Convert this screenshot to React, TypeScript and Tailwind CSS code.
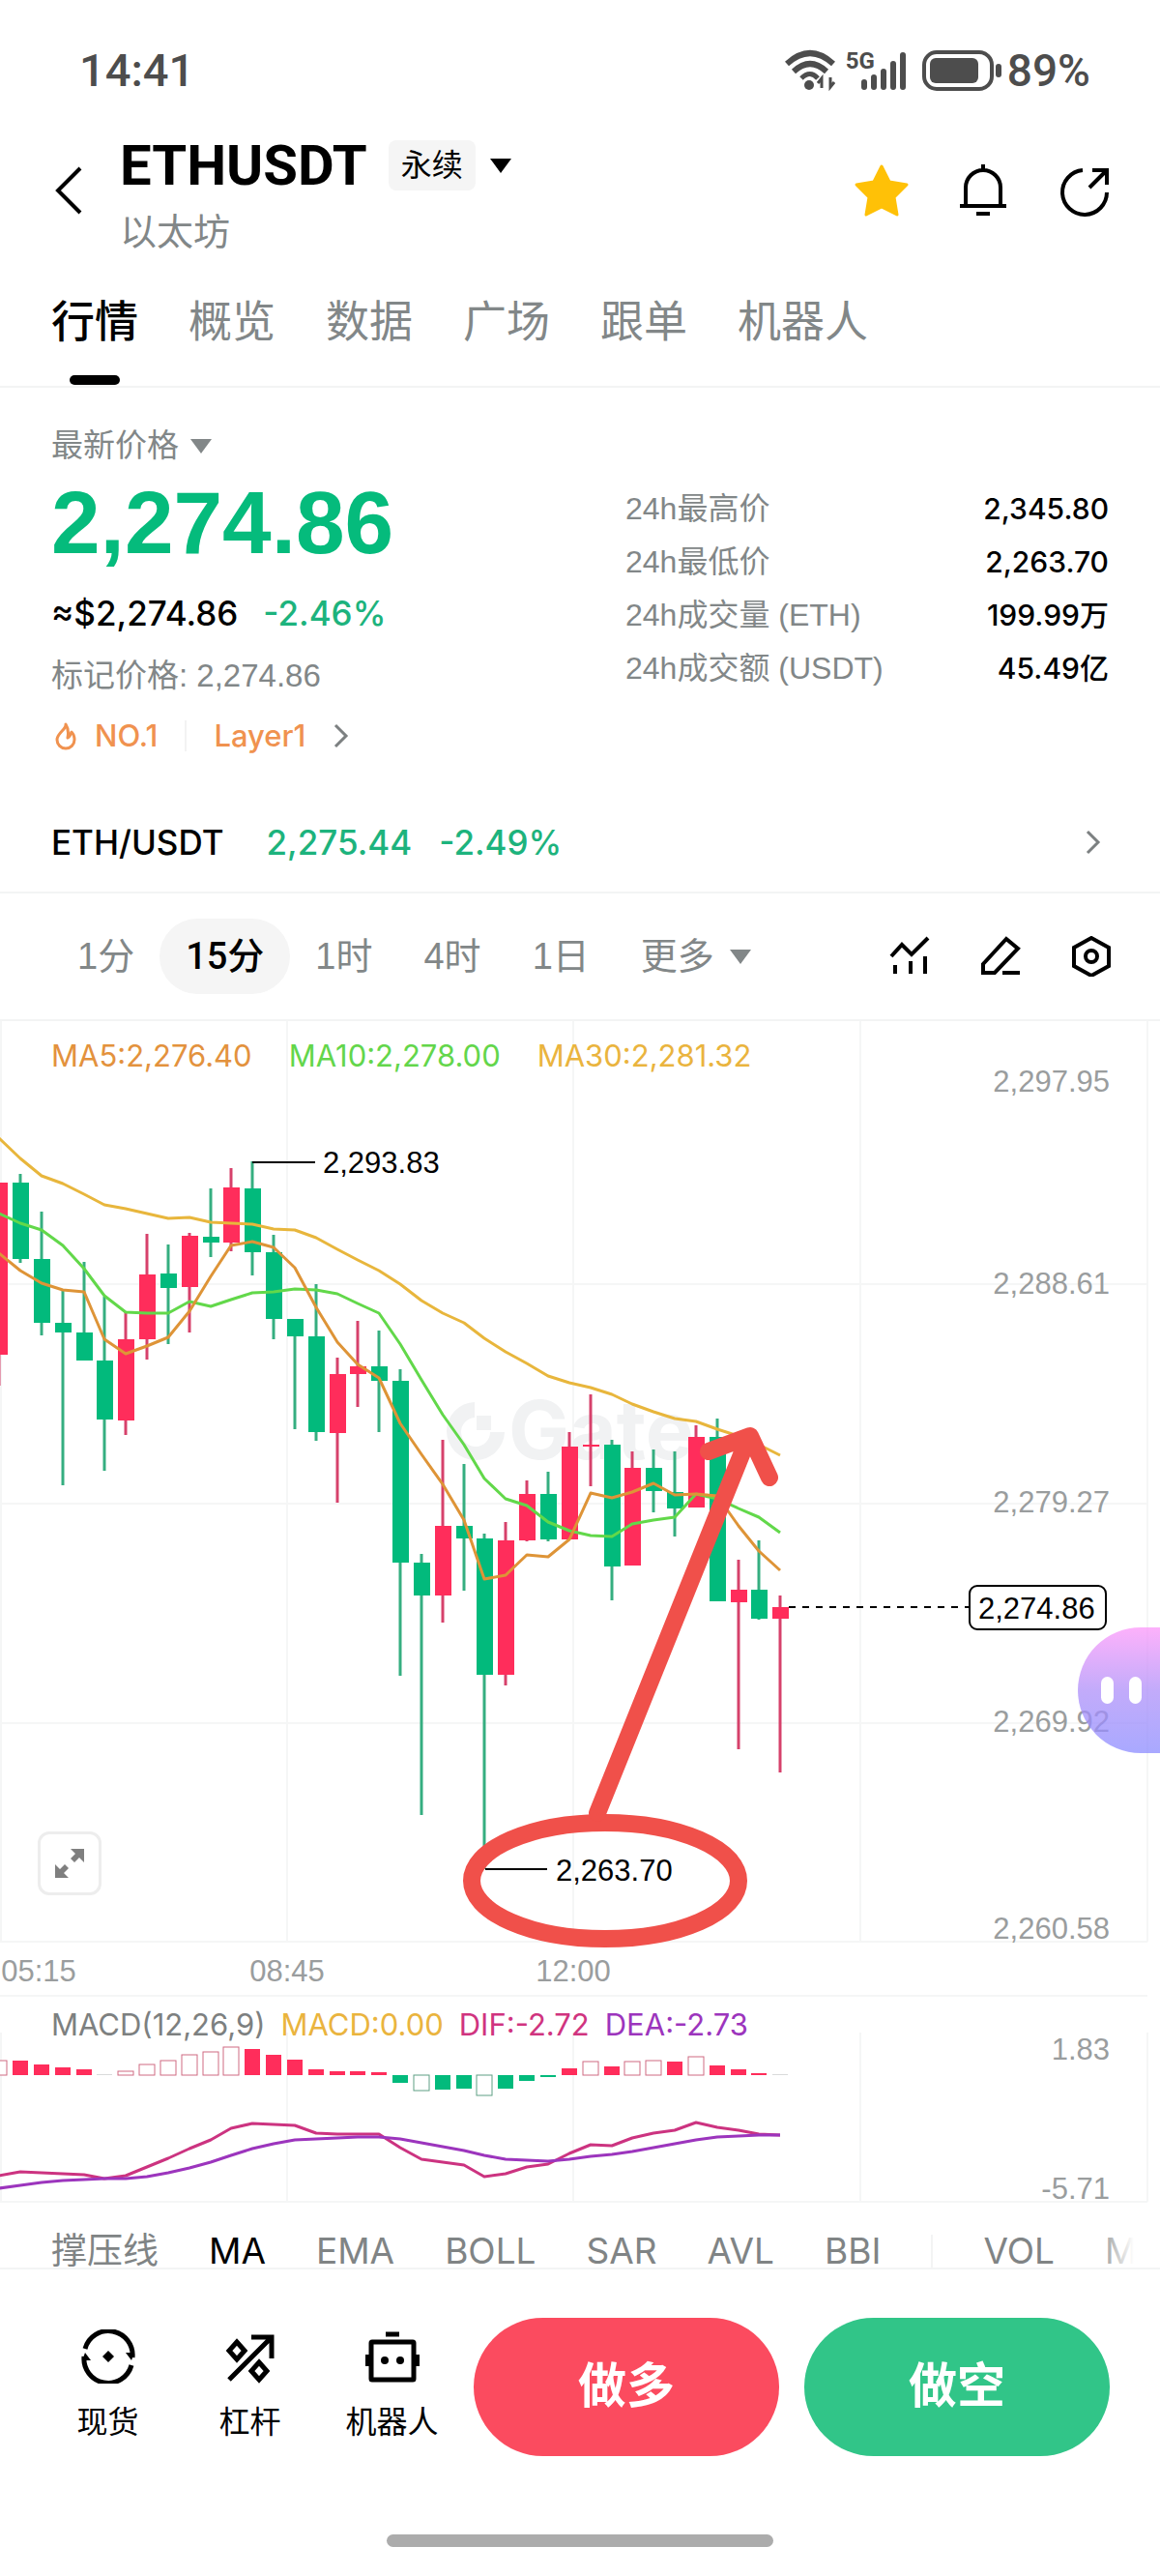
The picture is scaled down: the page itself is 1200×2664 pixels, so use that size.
import React, { useState } from 'react';

interface Candle {
  up: boolean;
  high: number;
  top: number;
  bottom: number;
  low: number;
}

interface MacdBar {
  y: number;
  color: 'red' | 'green' | 'flat';
  hollow?: boolean;
}

const PAGE_FONT = "font-['Liberation_Sans','Noto_Sans_CJK_SC',sans-serif]";
const TITLE_FONT = "font-['Roboto','Noto_Sans_CJK_SC',sans-serif]";
const LABEL_FONT = "font-['Inter','Noto_Sans_CJK_SC',sans-serif]";

const TABS = ['行情', '概览', '数据', '广场', '跟单', '机器人'];
const INTERVALS = ['1分', '15分', '1时', '4时', '1日'];
const MAIN_INDICATORS = ['撑压线', 'MA', 'EMA', 'BOLL', 'SAR', 'AVL', 'BBI'];

const STATS = [
  { label: '24h最高价', value: '2,345.80' },
  { label: '24h最低价', value: '2,263.70' },
  { label: '24h成交量 (ETH)', value: '199.99万' },
  { label: '24h成交额 (USDT)', value: '45.49亿' },
];

const RED = '#ff2d5b';
const RED_WICK = '#d6416b';
const GREEN = '#02ba7c';
const GREEN_WICK = '#35ae80';

const c = (up: boolean, high: number, top: number, bottom: number, low: number): Candle => ({ up, high, top, bottom, low });

// Red is a rising candle here, green a falling one
const CANDLES: Candle[] = [
  c(true, 1223, 1223, 1401, 1433),
  c(false, 1214, 1223, 1302, 1306),
  c(false, 1253, 1302, 1368, 1381),
  c(false, 1335, 1368, 1378, 1536),
  c(false, 1305, 1378, 1407, 1407),
  c(false, 1341, 1407, 1468, 1521),
  c(true, 1357, 1385, 1469, 1484),
  c(true, 1276, 1318, 1385, 1406),
  c(false, 1287, 1317, 1332, 1390),
  c(true, 1275, 1278, 1331, 1378),
  c(false, 1229, 1279, 1285, 1300),
  c(true, 1208, 1228, 1285, 1294),
  c(false, 1201, 1229, 1295, 1319),
  c(false, 1277, 1295, 1364, 1385),
  c(false, 1364, 1364, 1382, 1478),
  c(false, 1328, 1382, 1481, 1490),
  c(true, 1404, 1421, 1482, 1554),
  c(true, 1366, 1413, 1421, 1455),
  c(false, 1376, 1413, 1428, 1481),
  c(false, 1416, 1428, 1616, 1733),
  c(false, 1607, 1616, 1650, 1877),
  c(true, 1489, 1578, 1650, 1678),
  c(false, 1514, 1578, 1591, 1645),
  c(false, 1586, 1591, 1732, 1933),
  c(true, 1574, 1593, 1732, 1743),
  c(true, 1531, 1545, 1593, 1594),
  c(false, 1522, 1545, 1592, 1594),
  c(true, 1481, 1496, 1592, 1592),
  c(true, 1442, 1494, 1496, 1537),
  c(false, 1489, 1494, 1620, 1655),
  c(true, 1501, 1518, 1619, 1619),
  c(false, 1499, 1518, 1542, 1564),
  c(false, 1501, 1543, 1560, 1589),
  c(true, 1474, 1486, 1559, 1559),
  c(false, 1467, 1486, 1656, 1656),
  c(true, 1613, 1644, 1657, 1809),
  c(false, 1593, 1644, 1674, 1675),
  c(true, 1650, 1662, 1674, 1833),
];

const MA30 = [1177, 1198, 1216, 1224, 1235, 1246, 1250, 1255, 1260, 1259, 1264, 1265, 1266, 1271, 1272, 1280, 1292, 1303, 1314, 1328, 1345, 1358, 1368, 1384, 1398, 1410, 1423, 1430, 1435, 1442, 1452, 1460, 1467, 1470, 1478, 1485, 1494, 1505];
const MA10 = [1255, 1265, 1272, 1288, 1312, 1340, 1357, 1358, 1358, 1346, 1351, 1344, 1337, 1336, 1333, 1334, 1338, 1348, 1358, 1390, 1427, 1463, 1494, 1529, 1550, 1557, 1574, 1583, 1588, 1589, 1576, 1572, 1569, 1545, 1550, 1560, 1569, 1585];
const MA5 = [1296, 1314, 1327, 1334, 1336, 1385, 1400, 1392, 1383, 1356, 1320, 1288, 1284, 1290, 1311, 1352, 1388, 1411, 1425, 1472, 1504, 1535, 1572, 1633, 1629, 1608, 1610, 1592, 1544, 1549, 1543, 1534, 1546, 1545, 1547, 1578, 1604, 1624];
const DIF = [2250, 2246, 2247, 2248, 2249, 2253, 2250, 2241, 2232, 2222, 2213, 2201, 2196, 2197, 2198, 2206, 2207, 2207, 2207, 2221, 2233, 2236, 2239, 2251, 2248, 2241, 2238, 2227, 2218, 2219, 2211, 2206, 2203, 2195, 2200, 2203, 2207, 2208];
const DEA = [2263, 2260, 2257, 2255, 2254, 2253, 2253, 2251, 2247, 2242, 2236, 2229, 2222, 2217, 2213, 2212, 2211, 2210, 2210, 2212, 2216, 2220, 2224, 2229, 2233, 2234, 2235, 2233, 2230, 2228, 2225, 2221, 2217, 2213, 2210, 2209, 2208, 2208];

const MACD_ZERO = 2146;
const MACD_BARS: MacdBar[] = [
  { y: 2131, color: 'red', hollow: true },
  { y: 2131, color: 'red' },
  { y: 2135, color: 'red' },
  { y: 2138, color: 'red' },
  { y: 2140, color: 'red' },
  { y: 2145, color: 'flat' },
  { y: 2142, color: 'red', hollow: true },
  { y: 2135, color: 'red', hollow: true },
  { y: 2131, color: 'red', hollow: true },
  { y: 2125, color: 'red', hollow: true },
  { y: 2122, color: 'red', hollow: true },
  { y: 2117, color: 'red', hollow: true },
  { y: 2119, color: 'red' },
  { y: 2125, color: 'red' },
  { y: 2130, color: 'red' },
  { y: 2140, color: 'red' },
  { y: 2142, color: 'red' },
  { y: 2142, color: 'red' },
  { y: 2143, color: 'red' },
  { y: 2154, color: 'green' },
  { y: 2162, color: 'green', hollow: true },
  { y: 2161, color: 'green' },
  { y: 2160, color: 'green' },
  { y: 2167, color: 'green', hollow: true },
  { y: 2160, color: 'green' },
  { y: 2152, color: 'green' },
  { y: 2148, color: 'green' },
  { y: 2139, color: 'red' },
  { y: 2132, color: 'red', hollow: true },
  { y: 2137, color: 'red' },
  { y: 2132, color: 'red', hollow: true },
  { y: 2131, color: 'red', hollow: true },
  { y: 2132, color: 'red' },
  { y: 2127, color: 'red', hollow: true },
  { y: 2136, color: 'red' },
  { y: 2140, color: 'red' },
  { y: 2144, color: 'red' },
  { y: 2145, color: 'flat' },
];

const xAt = (i: number) => Math.round(21 + 21.84 * (i - 1));
const toPoints = (ys: number[]) => ys.map((y, i) => `${xAt(i)},${y}`).join(' ');

const Caret: React.FC<{ className?: string }> = ({ className = '' }) => (
  <svg viewBox="0 0 22 15" className={`w-[22px] h-[15px] ${className}`} fill="currentColor" aria-hidden="true">
    <path d="M0 0h22L11 15z" />
  </svg>
);

const ChevronRight: React.FC = () => (
  <svg viewBox="0 0 16 26" className="w-4 h-[26px] text-[#7c8081]" fill="none" stroke="currentColor" strokeWidth="3" aria-hidden="true">
    <path d="M2 2l11 11L2 24" />
  </svg>
);

const StatusBar: React.FC = () => (
  <div className={`flex items-center justify-between pt-[46px] pl-[82px] pr-[72px] h-[100px] text-[#4d4d4d] font-medium ${TITLE_FONT}`}>
    <span className="text-[47px] leading-[54px]">14:41</span>
    <div className="flex items-center">
      <svg viewBox="0 0 52 44" className="w-[52px] h-11" fill="none" stroke="currentColor" aria-hidden="true">
        <path d="M2 15Q26 -7 50 15" strokeWidth="6" />
        <path d="M9 23Q26 7 43 23" strokeWidth="6" />
        <path d="M17 30Q26 21 34 30" strokeWidth="5" />
        <circle cx="25" cy="37" r="5" fill="currentColor" stroke="none" />
        <path d="M38 40V30l-4 5M47 29v10l4-5" strokeWidth="3" />
      </svg>
      <div className="relative ml-[11px]">
        <svg viewBox="0 0 63 44" className="w-[63px] h-11" fill="none" stroke="currentColor" strokeWidth="6" strokeLinecap="round" aria-hidden="true">
          <path d="M19 34v5M29 29v10M39 23v16M49 15v24M59 6v33" />
        </svg>
        <span className="absolute left-0 top-0 text-[24px] leading-6 font-bold">5G</span>
      </div>
      <svg viewBox="0 0 84 42" className="w-[84px] h-[42px] ml-4 mr-1" fill="none" aria-hidden="true">
        <rect x="2" y="2" width="70" height="38" rx="13" stroke="currentColor" strokeWidth="4" />
        <rect x="8" y="8" width="50" height="26" rx="6" fill="currentColor" />
        <rect x="76" y="14" width="6" height="14" rx="3" fill="currentColor" />
      </svg>
      <span className="text-[46px] leading-[54px]">89%</span>
    </div>
  </div>
);

const Header: React.FC = () => (
  <header className="flex items-center pt-[35px] pl-[56px] pr-[48px]">
    <button aria-label="返回" className="w-[30px] mr-[38px]">
      <svg viewBox="0 0 30 50" className="w-[30px] h-[50px]" fill="none" stroke="currentColor" strokeWidth="4" aria-hidden="true">
        <path d="M27 2L4 25l23 23" />
      </svg>
    </button>
    <div className="flex-1">
      <div className="flex items-center h-[72px]">
        <h1 className={`text-[58px] leading-[72px] font-bold ${TITLE_FONT}`}>ETHUSDT</h1>
        <button className="flex items-center ml-[22px]">
          <span className="px-[13px] rounded-lg bg-[#f5f5f5] text-[32px] leading-[52px]">永续</span>
          <Caret className="ml-[15px]" />
        </button>
      </div>
      <p className="mt-[14px] text-[38px] leading-[38px] text-[#828788]">以太坊</p>
    </div>
    <div className="flex items-center gap-[45px]">
      <button aria-label="收藏" className="text-[#ffc107]">
        <svg viewBox="0 0 60 60" className="w-[60px] h-[60px]" fill="currentColor" stroke="currentColor" strokeWidth="3" strokeLinejoin="round" aria-hidden="true">
          <path d="M30 5l8 16 18 3-13 13 3 18-16-8-16 8 3-18L4 24l18-3z" />
        </svg>
      </button>
      <button aria-label="提醒">
        <svg viewBox="0 0 60 60" className="w-[60px] h-[60px]" fill="none" stroke="currentColor" strokeWidth="4" aria-hidden="true">
          <path d="M30 3v6M12 45V27a18 18 0 0 1 36 0v18M6 46h48M23 54h14" />
        </svg>
      </button>
      <button aria-label="分享">
        <svg viewBox="0 0 60 60" className="w-[60px] h-[60px]" fill="none" stroke="currentColor" strokeWidth="4" aria-hidden="true">
          <path d="M28 9A23 23 0 1 0 53 32M35 27L52 10M38 9h15v15" />
        </svg>
      </button>
    </div>
  </header>
);

const PriceSummary: React.FC = () => (
  <section className="pt-10 px-[53px]">
    <div className="flex justify-between">
      <div>
        <button className="flex items-center gap-[12px] text-[33px] leading-10 text-[#828788]">
          最新价格
          <Caret />
        </button>
        <p className="mt-[10px] text-[91px] leading-[100px] font-bold text-[#05bb7c]">2,274.86</p>
        <p className={`mt-[21px] flex gap-[26px] text-[35px] leading-[44px] font-medium ${LABEL_FONT}`}>
          <span>≈$2,274.86</span>
          <span className="text-[#1db37d]">-2.46%</span>
        </p>
        <p className="mt-[23px] text-[33px] leading-10 text-[#828788]">标记价格: 2,274.86</p>
        <a href="#layer1" className={`mt-[22px] flex items-center text-[31px] leading-10 font-medium text-[#f0924f] ${LABEL_FONT}`}>
          <svg viewBox="0 0 28 30" className="w-7 h-[30px] mr-[17px]" fill="none" stroke="currentColor" strokeWidth="3" strokeLinejoin="round" aria-hidden="true">
            <path d="M15 3c1 5-9 9-9 16 0 5 4 9 9 9s9-4 9-9c0-3-1-6-3-8-1 3-2 5-4 6 1-5 0-11-2-14z" />
          </svg>
          NO.1
          <span className="mx-[28px] h-8 w-[2px] bg-[#f3f3f3]" />
          <span className="mr-[29px]">Layer1</span>
          <ChevronRight />
        </a>
      </div>
      <dl className="mt-[58px] w-[500px]">
        {STATS.map(({ label, value }) => (
          <div key={label} className="flex justify-between leading-[55px]">
            <dt className="text-[32px] text-[#828788]">{label}</dt>
            <dd className={`text-[30px] font-medium ${LABEL_FONT}`}>{value}</dd>
          </div>
        ))}
      </dl>
    </div>
    <a href="#spot" className={`mt-[68px] pb-[29px] flex items-center text-[35px] leading-[44px] font-medium ${LABEL_FONT}`}>
      <span>ETH/USDT</span>
      <span className="ml-[44px] text-[#1db37d]">2,275.44</span>
      <span className="ml-[28px] mr-auto text-[#1db37d]">-2.49%</span>
      <span className="mr-[8px]">
        <ChevronRight />
      </span>
    </a>
  </section>
);

const ChartToolbar: React.FC = () => {
  const [interval, setInterval] = useState('15分');

  return (
    <div className="flex items-center justify-between py-[26px] pl-20 pr-[50px] border-y-2 border-[#f3f4f4]">
      <div className="flex items-center gap-[53px] text-[38px] leading-[78px] text-[#828788]">
        {INTERVALS.map((item) => (
          <button
            key={item}
            onClick={() => setInterval(item)}
            className={item === interval ? `-mx-[27px] px-[27px] rounded-full bg-[#f5f5f5] font-medium text-black ${TITLE_FONT}` : ''}
          >
            {item}
          </button>
        ))}
        <button className="flex items-center gap-[16px]">
          更多
          <Caret />
        </button>
      </div>
      <div className="flex items-center gap-[52px]">
        <button aria-label="指标">
          <svg viewBox="0 0 42 42" className="w-[42px] h-[42px]" fill="none" stroke="currentColor" strokeWidth="4" aria-hidden="true">
            <path d="M2 21l11-12 10 10L40 2M6 30v9M22 26v13M37 21v18" />
          </svg>
        </button>
        <button aria-label="画线">
          <svg viewBox="0 0 42 42" className="w-[42px] h-[42px]" fill="none" stroke="currentColor" strokeWidth="4" aria-hidden="true">
            <path d="M3 38v-9L27 3l12 10-24 25zM23 38h18" />
          </svg>
        </button>
        <button aria-label="设置">
          <svg viewBox="0 0 42 42" className="w-[42px] h-[42px]" fill="none" stroke="currentColor" strokeWidth="4" aria-hidden="true">
            <path d="M21 2l18 10v19L21 41 3 31V12z" />
            <circle cx="21" cy="21" r="6" />
          </svg>
        </button>
      </div>
    </div>
  );
};

const PriceChart: React.FC = () => (
  <div className="relative">
    <svg viewBox="0 1056 1200 1007" className="block w-full" role="img" aria-label="ETHUSDT K线图">
      <g stroke="#f5f6f6" strokeWidth="2">
        {[1, 297, 593, 890, 1187].map((x) => (
          <line key={x} x1={x} x2={x} y1="1056" y2="2008" />
        ))}
        {[1328, 1555, 1782, 2008].map((y) => (
          <line key={y} x1="0" x2="1187" y1={y} y2={y} />
        ))}
      </g>

      {/* Watermark */}
      <g fill="#f1f2f3">
        <path d="M491 1450a30 30 0 1 0 31 31h-15a15 15 0 1 1-16-15zM493 1464h15v15h-15z" />
        <text x="526" y="1509" fontSize="84" fontWeight="700" fontFamily="Inter, sans-serif">Gate</text>
      </g>

      {CANDLES.map((candle, i) => (
        <g key={i}>
          <line x1={xAt(i)} x2={xAt(i)} y1={candle.high} y2={candle.low} stroke={candle.up ? RED_WICK : GREEN_WICK} strokeWidth="3" />
          <rect x={xAt(i) - 8} y={candle.top} width="17" height={candle.bottom - candle.top} fill={candle.up ? RED : GREEN} />
        </g>
      ))}

      <g fill="none" strokeWidth="3" strokeLinejoin="round">
        <polyline points={toPoints(MA30)} stroke="#e8b63c" />
        <polyline points={toPoints(MA10)} stroke="#62d84a" />
        <polyline points={toPoints(MA5)} stroke="#de9437" />
      </g>

      {/* Price axis */}
      <g fontSize="31" fill="#9a9d9e" textAnchor="end">
        <text x="1148" y="1129">2,297.95</text>
        <text x="1148" y="1338">2,288.61</text>
        <text x="1148" y="1564">2,279.27</text>
        <text x="1148" y="1791">2,269.92</text>
        <text x="1148" y="2005">2,260.58</text>
      </g>

      {/* Time axis */}
      <g fontSize="31" fill="#9a9d9e" textAnchor="middle">
        <text x="40" y="2049">05:15</text>
        <text x="297" y="2049">08:45</text>
        <text x="593" y="2049">12:00</text>
      </g>

      {/* High, low and last price marks */}
      <g fontSize="31" fill="#000">
        <path d="M261 1202h65M502 1933h64" stroke="#000" strokeWidth="2" />
        <text x="334" y="1213">2,293.83</text>
        <text x="575" y="1945">2,263.70</text>
        <path d="M816 1662h186" stroke="#000" strokeWidth="2" strokeDasharray="7 7" />
        <rect x="1003" y="1640" width="141" height="45" rx="8" fill="#fff" stroke="#000" strokeWidth="2" />
        <text x="1012" y="1674">2,274.86</text>
      </g>

      {/* Hand-drawn note */}
      <g fill="none" stroke="#f0504a" strokeWidth="18" strokeLinecap="round" strokeLinejoin="round">
        <ellipse cx="626" cy="1945" rx="138" ry="60" />
        <path d="M618 1875L774 1487M733 1501l43-16 20 43" />
      </g>
    </svg>

    <p className={`absolute left-[53px] top-[16px] flex gap-[38px] text-[31px] leading-10 ${LABEL_FONT}`}>
      <span className="text-[#e3923d]">MA5:2,276.40</span>
      <span className="text-[#63d64b]">MA10:2,278.00</span>
      <span className="text-[#eab43e]">MA30:2,281.32</span>
    </p>

    <button aria-label="全屏" className="absolute left-[39px] bottom-[103px] flex items-center justify-center w-[66px] h-[66px] rounded-xl border-[3px] border-[#ededed] bg-white text-[#7f7f7f]">
      <svg viewBox="0 0 32 32" className="w-8 h-8" fill="currentColor" aria-hidden="true">
        <path d="M17 1h14v14l-5-5-5 5-4-4 5-5zM1 31V17l5 5 5-5 4 4-5 5 5 5z" />
      </svg>
    </button>

    <button aria-label="助手" className="absolute right-0 bottom-[250px] flex items-center gap-4 w-[85px] h-[130px] pl-6 rounded-l-full bg-linear-to-b from-[#fc97fa]/75 via-[#ae8ff9]/75 to-[#8c8cff]/75">
      <span className="w-[13px] h-7 rounded-full bg-white" />
      <span className="w-[13px] h-7 rounded-full bg-white" />
    </button>
  </div>
);

const MacdChart: React.FC = () => (
  <div className="relative">
    <svg viewBox="0 2063 1200 215" className="block w-full overflow-visible" role="img" aria-label="MACD">
      <g stroke="#f5f6f6" strokeWidth="2">
        <path d="M0 2064h1187M0 2277h1187" />
        <path d="M1 2102v175M297 2102v175M593 2102v175M890 2102v175M1187 2102v175" />
      </g>
      {MACD_BARS.map((bar, i) => {
        const top = Math.min(bar.y, MACD_ZERO);
        const height = Math.abs(bar.y - MACD_ZERO);
        if (bar.color === 'flat') {
          return <rect key={i} x={xAt(i) - 8} y={top} width="16" height="1" fill="#d9dada" />;
        }
        if (bar.hollow) {
          return (
            <rect key={i} x={xAt(i) - 8} y={top} width="16" height={height} fill="#fff" stroke={bar.color === 'red' ? '#cf6a82' : '#5f9f84'} />
          );
        }
        return <rect key={i} x={xAt(i) - 8} y={top} width="16" height={height} fill={bar.color === 'red' ? RED : GREEN} />;
      })}
      <g fill="none" strokeWidth="3" strokeLinejoin="round">
        <polyline points={toPoints(DIF)} stroke="#cc3380" />
        <polyline points={toPoints(DEA)} stroke="#9c35bd" />
      </g>
      <g fontSize="31" fill="#9a9d9e" textAnchor="end">
        <text x="1148" y="2130">1.83</text>
        <text x="1148" y="2274">-5.71</text>
      </g>
    </svg>
    <p className={`absolute left-[53px] top-[11px] flex gap-4 text-[31px] leading-10 ${LABEL_FONT}`}>
      <span className="text-[#7d8080]">MACD(12,26,9)</span>
      <span className="text-[#eab43e]">MACD:0.00</span>
      <span className="text-[#d0347f]">DIF:-2.72</span>
      <span className="text-[#9c35bd]">DEA:-2.73</span>
    </p>
  </div>
);

const IndicatorStrip: React.FC = () => (
  <div className="relative pt-[33px] border-b-2 border-[#f3f4f4]">
    <div className={`flex items-center gap-[52px] pl-[53px] text-[37px] leading-[34px] text-[#808485] whitespace-nowrap ${LABEL_FONT}`}>
      {MAIN_INDICATORS.map((name) => (
        <button key={name} className={name === 'MA' ? 'text-black' : ''}>
          {name}
        </button>
      ))}
      <span className="w-[2px] h-[34px] bg-[#f3f4f4]" />
      <button>VOL</button>
      <button>M</button>
    </div>
    <div className="absolute inset-y-0 right-0 w-[68px] bg-linear-to-r from-white/0 to-white to-60%" />
  </div>
);

const BottomBar: React.FC = () => (
  <footer>
    <div className="flex pt-[50px] pl-[38px] pr-[52px]">
      <nav className="grid grid-cols-3 w-[441px] mr-[11px] pt-3 text-[32px] leading-10">
        <a href="#spot-trade" className="flex flex-col items-center gap-5">
          <svg viewBox="0 0 56 56" className="w-14 h-14" fill="none" stroke="currentColor" strokeWidth="5" aria-hidden="true">
            <path d="M4 20A25 25 0 0 1 53 29M52 37A25 25 0 0 1 3 28" />
            <path d="M46 24h9l-3 8zM10 32H1l3-8z" fill="currentColor" stroke="none" />
            <path d="M28 22l6 6-6 6-6-6z" fill="currentColor" stroke="none" />
          </svg>
          现货
        </a>
        <a href="#margin" className="flex flex-col items-center gap-5">
          <svg viewBox="0 0 56 56" className="w-14 h-14" fill="none" stroke="currentColor" strokeWidth="5" aria-hidden="true">
            <path d="M6 52L49 9M29 8h21v22M14 13l8 9-8 9-8-9zM37 34l8 9-8 9-8-9z" />
          </svg>
          杠杆
        </a>
        <a href="#bot" className="flex flex-col items-center gap-5">
          <svg viewBox="0 0 56 56" className="w-14 h-14" fill="none" stroke="currentColor" strokeWidth="5" aria-hidden="true">
            <rect x="6" y="13" width="44" height="39" rx="1" />
            <path d="M21 5h14M2 26v12M54 26v12" />
            <circle cx="20" cy="32" r="4" fill="currentColor" stroke="none" />
            <circle cx="36" cy="32" r="4" fill="currentColor" stroke="none" />
          </svg>
          机器人
        </a>
      </nav>
      <div className="flex-1 flex gap-[26px] text-[50px] leading-[143px] font-bold text-white">
        <button className="flex-1 rounded-full bg-[#fb4b5f]">做多</button>
        <button className="flex-1 rounded-full bg-[#31c588]">做空</button>
      </div>
    </div>
    <div className="mx-auto mt-[81px] mb-[30px] w-1/3 h-[13px] rounded-full bg-[#acacac]" />
  </footer>
);

const App: React.FC = () => {
  const [tab, setTab] = useState('行情');

  return (
    <div className={`w-full bg-white text-black ${PAGE_FONT}`}>
      <StatusBar />
      <Header />
      <nav className="flex gap-[52px] pt-[45px] pl-[53px] text-[45px] leading-[60px] text-[#828788] border-b-2 border-[#f3f4f4]">
        {TABS.map((item) => (
          <button key={item} onClick={() => setTab(item)} className={`flex flex-col items-center gap-6 pb-px ${item === tab ? 'font-medium text-black' : ''}`}>
            {item}
            <span className={`w-[52px] h-[10px] rounded-full ${item === tab ? 'bg-black' : ''}`} />
          </button>
        ))}
      </nav>
      <PriceSummary />
      <ChartToolbar />
      <PriceChart />
      <MacdChart />
      <IndicatorStrip />
      <BottomBar />
    </div>
  );
};

export default App;
